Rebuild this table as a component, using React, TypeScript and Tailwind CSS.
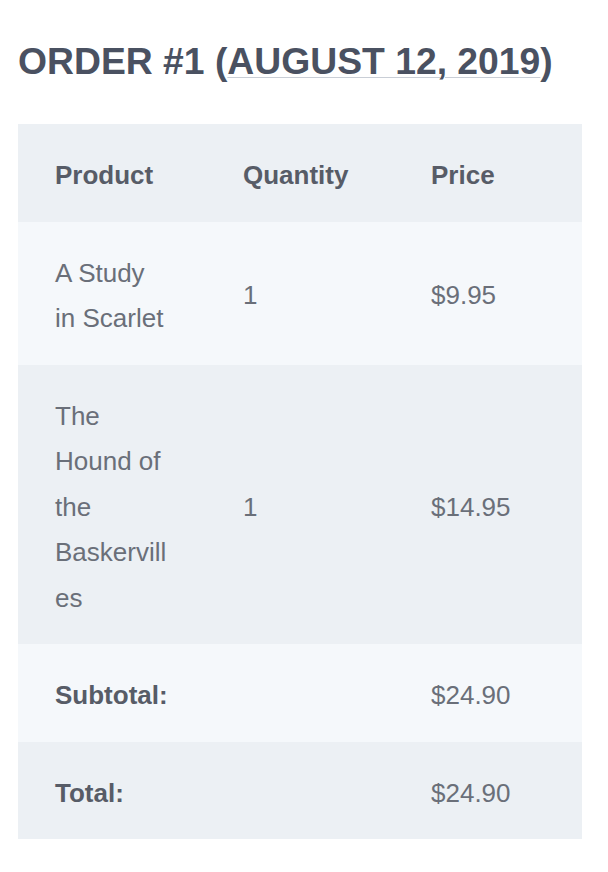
const rows = [
  { product: "A Study in Scarlet", qty: "1", price: "$9.95" },
  { product: "The Hound of the Baskervilles", qty: "1", price: "$14.95" },
];

const cell = "px-[37px] pt-[29px] pb-[23px] break-words";

export default function App() {
  return (
    <div className="min-h-[872px] bg-white px-[18px] pt-[37px] font-[family-name:'Liberation_Sans',Arial,sans-serif]">
      {/* Title */}
      <h2 className="text-[37.3px] font-bold leading-[48px] text-[#4a5161]">
        ORDER #1 (
        <span className="underline decoration-[#c9ced6] decoration-1 underline-offset-[3px]">
          AUGUST 12, 2019
        </span>
        )
      </h2>

      {/* Order table */}
      <div className="mt-[39px] grid w-[564px] grid-cols-3 text-[26px] leading-[45.5px] text-[#6a6f79]">
        <div className={`${cell} bg-[#ecf0f4] font-bold text-[#575c67]`}>Product</div>
        <div className={`${cell} bg-[#ecf0f4] font-bold text-[#575c67]`}>Quantity</div>
        <div className={`${cell} bg-[#ecf0f4] font-bold text-[#575c67]`}>Price</div>

        {rows.map((row, i) => {
          const bg = i % 2 === 0 ? "bg-[#f5f8fb]" : "bg-[#ecf0f4]";
          return [
            <div key={`p${i}`} className={`${cell} ${bg} flex items-center`}>
              <span className="min-w-0 break-words">{row.product}</span>
            </div>,
            <div key={`q${i}`} className={`${cell} ${bg} flex items-center`}>
              {row.qty}
            </div>,
            <div key={`r${i}`} className={`${cell} ${bg} flex items-center`}>
              {row.price}
            </div>,
          ];
        })}

        <div className={`${cell} bg-[#f5f8fb] font-bold text-[#575c67]`}>Subtotal:</div>
        <div className={`${cell} bg-[#f5f8fb]`} />
        <div className={`${cell} bg-[#f5f8fb]`}>$24.90</div>

        <div className={`${cell} bg-[#ecf0f4] font-bold text-[#575c67]`}>Total:</div>
        <div className={`${cell} bg-[#ecf0f4]`} />
        <div className={`${cell} bg-[#ecf0f4]`}>$24.90</div>
      </div>
    </div>
  );
}
